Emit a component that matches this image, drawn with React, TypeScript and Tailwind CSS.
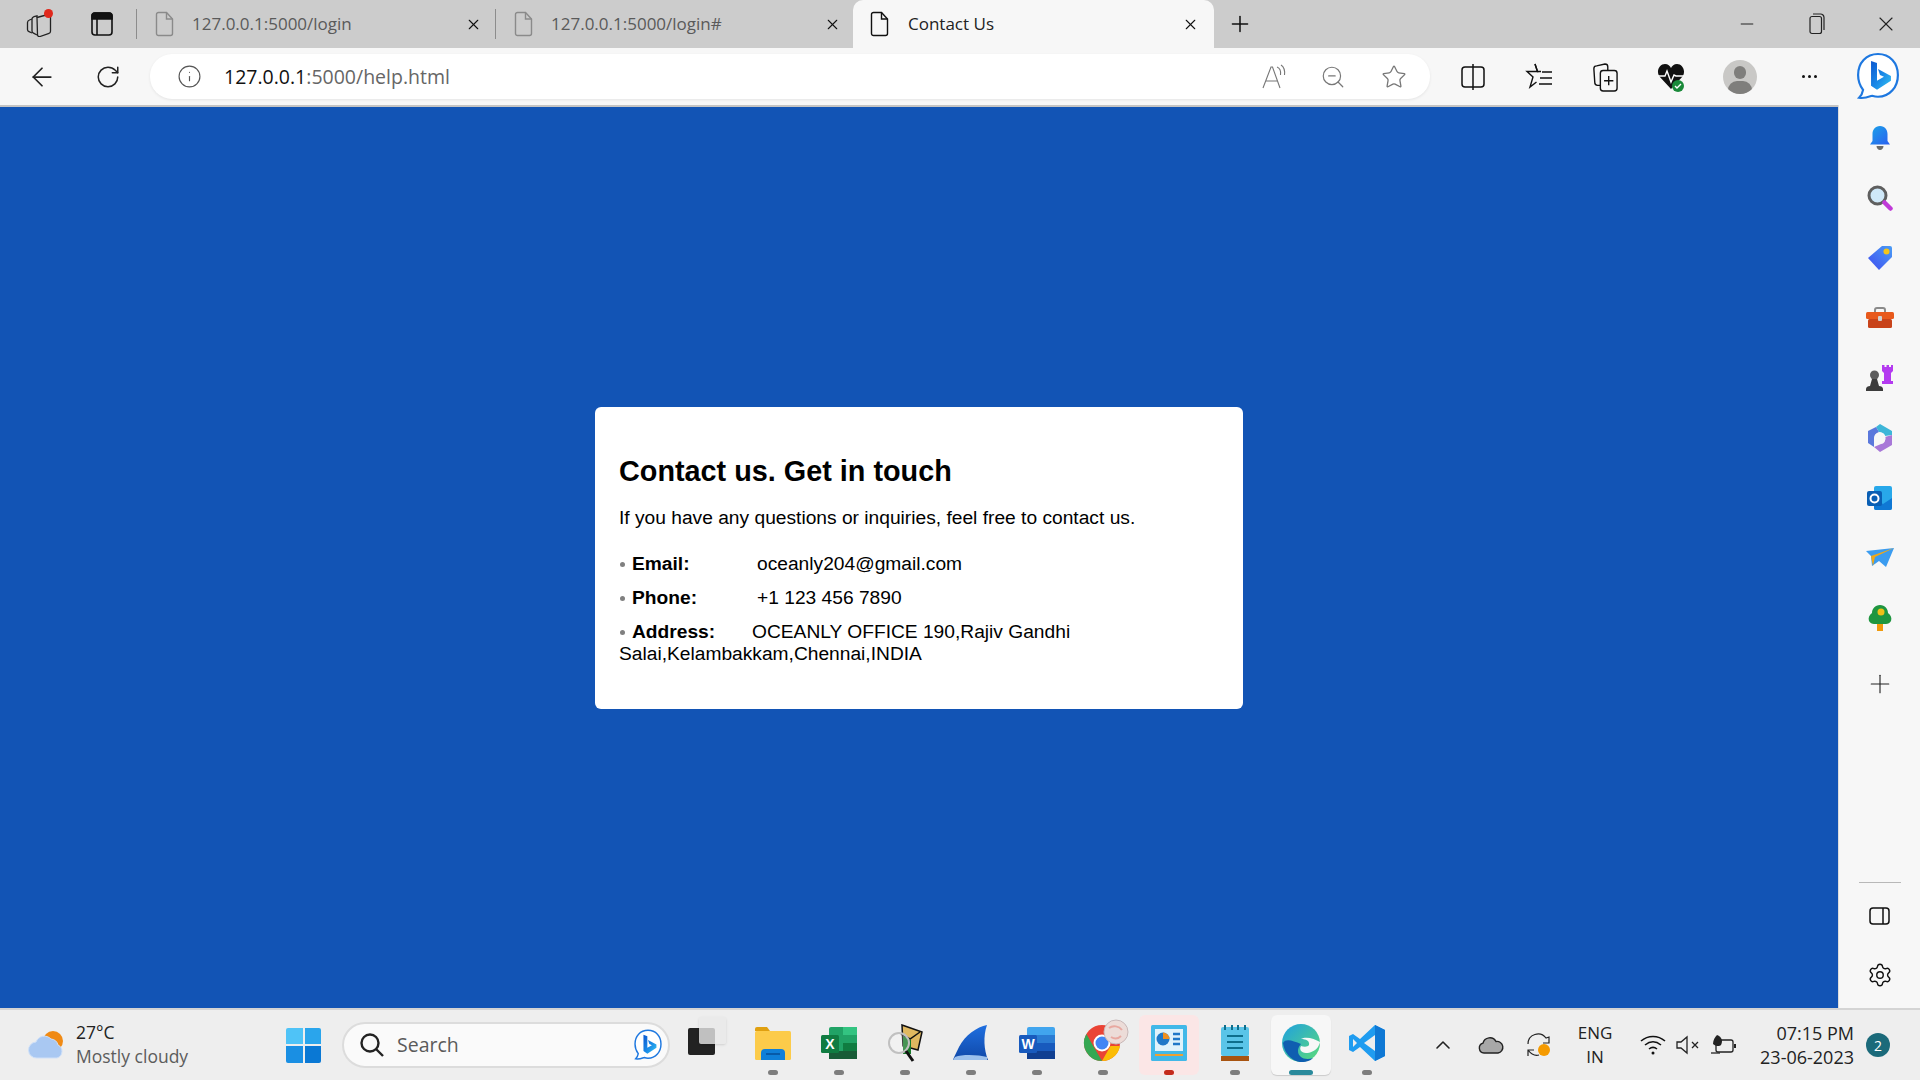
import { ArrowLeft, ChevronUp, Info, Minus, Plus, RotateCw, Settings, Star, X, ZoomOut } from 'lucide-react'
import type { ReactNode } from 'react'

const ui = { fontFamily: '"Open Sans", "Noto Sans", sans-serif' }

function FileIcon({ color = '#8a8a8a' }: { color?: string }) {
    return (
        <svg width="20" height="26" viewBox="0 0 20 26" fill="none" stroke={color} strokeWidth="1.4">
            <path d="M3.5 1.5h8l6 6.5v14.5a2 2 0 0 1-2 2h-12a2 2 0 0 1-2-2v-19a2 2 0 0 1 2-2z" />
            <path d="M11.5 1.5v6.5h6" />
        </svg>
    )
}

function Tab({ title, separator = true }: { title: string; separator?: boolean }) {
    return (
        <div className="flex h-full w-[359px] items-center">
            {separator && <div className="h-[30px] w-px bg-[#8c8c8c]" />}
            <div className="ml-[18px] flex w-[340px] items-center">
                <FileIcon />
                <span className="mt-[-1px] ml-[17px] flex-1 text-[17px] text-[#5a5a5a]">{title}</span>
                <X size={17} strokeWidth={1.5} color="#111" className="mr-[13px]" />
            </div>
        </div>
    )
}

function BingLogo({ size = 46, id }: { size?: number; id: string }) {
    return (
        <svg width={size} height={size * 1.06} viewBox="0 0 46 49">
            <defs>
                <linearGradient id={id} x1="0" y1="0" x2="1" y2="1">
                    <stop offset="0" stopColor="#0b57d0" />
                    <stop offset="0.55" stopColor="#1b8ce8" />
                    <stop offset="1" stopColor="#37c6f0" />
                </linearGradient>
            </defs>
            <path d="M23 2C11 2 3 11 3 23c0 6 2 11 5 15-.5 3-2 6-4 8 5 1 10-1 13-2 2 .6 4 1 6 1 12 0 20-10 20-22S35 2 23 2z" fill="#fff" stroke="#1e78e0" strokeWidth="2.2" />
            <path d="M16 9l6 2v18l7-4-4-2-2-6 13 7v5l-14 9-6-4z" fill={`url(#${id})`} />
        </svg>
    )
}

function TitleBar() {
    return (
        <div className="flex h-12 shrink-0 items-center bg-[#cccccc]">
            <div className="flex w-[78px] justify-center">
                <div className="relative h-[26px] w-[26px]">
                    <svg width="26" height="26" viewBox="0 0 26 26" fill="none" stroke="#222" strokeWidth="1.3">
                        <path d="M11 6.5l11-3c1.2-.3 2.5.5 2.5 1.8v15c0 1-.5 1.8-1.5 2l-9 3.2c-1.3.3-2.5-.5-2.5-1.8z" />
                        <path d="M11 6.5V4.8l-3 .8C6.8 6 6 6.8 6 8v12c0 1 .6 1.8 1.5 2.2L11 24" />
                        <path d="M6 8L3.5 9C2.2 9.500 1.5 10.5 1.5 11.5v7c0 1 .6 1.8 1.5 2.2L6 22" />
                    </svg>
                    <div className="absolute right-[-1px] top-[-2px] size-[9px] rounded-full bg-[#e0281c]" />
                </div>
            </div>
            <div className="flex w-[48px] justify-center">
                <svg width="22" height="24" viewBox="0 0 22 24" fill="none" stroke="#111" strokeWidth="1.6">
                    <rect x="1" y="1" width="20" height="22" rx="3" />
                    <path d="M1 3.5a2.5 2.5 0 0 1 2.5-2.5h15A2.5 2.5 0 0 1 21 3.5V7H1z" fill="#111" />
                    <path d="M6 7v16" />
                </svg>
            </div>
            <div className="ml-[10px] flex h-full">
                <Tab title="127.0.0.1:5000/login" />
                <Tab title="127.0.0.1:5000/login#" />
            </div>
            <div className="ml-[-1px] flex h-full w-[361px] items-center rounded-t-[10px] bg-[#f7f7f7] pl-[17px]">
                <FileIcon color="#111" />
                <span className="mt-[-1px] ml-[18px] flex-1 text-[17px] text-[#222]">Contact Us</span>
                <X size={17} strokeWidth={1.5} color="#111" className="mr-[15px]" />
            </div>
            <Plus size={26} strokeWidth={1.4} color="#111" className="ml-[13px]" />
            <div className="flex-1" />
            <Minus size={20} strokeWidth={1.2} color="#222" className="mr-[52px]" />
            <svg width="16" height="22" viewBox="0 0 16 22" fill="none" stroke="#222" strokeWidth="1.2" className="mr-[49px]">
                <rect x="1" y="3.5" width="11.5" height="17" rx="2" />
                <path d="M4 1h7.5A3.5 3.5 0 0 1 15 4.5V17" />
            </svg>
            <X size={24} strokeWidth={1.1} color="#222" className="mr-[22px]" />
        </div>
    )
}

function ToolSlot({ width, children }: { width: number; children: ReactNode }) {
    return (
        <div className="flex items-center justify-center" style={{ width }}>
            {children}
        </div>
    )
}

function Toolbar() {
    return (
        <div className="flex h-[57px] shrink-0 items-center bg-[#f7f7f7]">
            <div className="flex w-[150px] items-center">
                <ArrowLeft size={30} strokeWidth={1.4} color="#222" className="ml-[27px]" />
                <RotateCw size={26} strokeWidth={1.4} color="#222" className="ml-[38px]" />
            </div>
            <div className="flex h-[45px] w-[1280px] items-center rounded-[22px] bg-white shadow-[0_1px_3px_rgba(0,0,0,0.08)]">
                <Info size={25} strokeWidth={1.1} color="#555" className="ml-[27px]" />
                <span className="ml-[22px] flex-1 text-[19.5px] text-[#666]">
                    <span className="text-[#111]">127.0.0.1</span>:5000/help.html
                </span>
                <svg width="26" height="26" viewBox="0 0 26 26" fill="none" stroke="#777" strokeWidth="1.1" className="mr-[33px]">
                    <path d="M2 24L10 3h1.5L19 24M5 17h12" />
                    <path d="M16 3c3 1 4 4 3.5 8M20 1c3 2 4 6 3.5 10" />
                </svg>
                <ZoomOut size={26} strokeWidth={1.1} color="#777" className="mr-[35px]" />
                <Star size={26} strokeWidth={1.2} color="#777" className="mr-[23px]" />
            </div>
            <ToolSlot width={86}>
                <svg width="24" height="28" viewBox="0 0 24 28" fill="none" stroke="#111" strokeWidth="1.5">
                    <rect x="1" y="4" width="22" height="20" rx="3" />
                    <path d="M12 1v26" />
                </svg>
            </ToolSlot>
            <ToolSlot width={46}>
                <svg width="28" height="30" viewBox="0 0 28 30" fill="none" stroke="#111" strokeWidth="1.4">
                    <path d="M10 2l2.5 7.5H2l6 5.5-3 10 6.5-5" />
                    <path d="M10 2l2.5 7.5H16M17 10h10M15 16h12M14 22h13" />
                </svg>
            </ToolSlot>
            <ToolSlot width={86}>
                <svg width="26" height="30" viewBox="0 0 28 32" fill="none" stroke="#111" strokeWidth="1.5">
                    <rect x="9" y="9" width="18" height="22" rx="3" />
                    <path d="M18 15v10M13 20h10" />
                    <path d="M9 25H6a3 3 0 0 1-3-3L2 7a3 3 0 0 1 3-3l9-2a3 3 0 0 1 3 3v4" />
                </svg>
            </ToolSlot>
            <ToolSlot width={46}>
                <svg width="28" height="32" viewBox="0 0 28 32">
                    <path d="M14 28L2 15C-1 9 3 3 8 3c3 0 5 2 6 4 1-2 3-4 6-4 5 0 9 6 6 12z" fill="#111" />
                    <path d="M1 15h7l2-5 4 11 3-7 2 1h8" fill="none" stroke="#fff" strokeWidth="1.4" />
                    <circle cx="21" cy="25" r="6" fill="#1a8a3a" />
                    <path d="M18 25l2 2 4-4" fill="none" stroke="#fff" strokeWidth="1.4" />
                </svg>
            </ToolSlot>
            <ToolSlot width={92}>
                <div className="relative size-[34px] overflow-hidden rounded-full bg-[#c9c8c6]">
                    <div className="absolute left-[11px] top-[6px] h-[13px] w-[12px] rounded-full bg-[#7f7e7c]" />
                    <div className="absolute left-[5px] top-[21px] h-[18px] w-[24px] rounded-full bg-[#7f7e7c]" />
                </div>
            </ToolSlot>
            <ToolSlot width={46}>
                <div className="flex gap-[3px]">
                    <div className="size-[3px] rounded-full bg-[#111]" />
                    <div className="size-[3px] rounded-full bg-[#111]" />
                    <div className="size-[3px] rounded-full bg-[#111]" />
                </div>
            </ToolSlot>
            <div className="ml-[17px] flex w-[58px] justify-center">
                <BingLogo id="bing-top" />
            </div>
        </div>
    )
}

function Bullet() {
    return <span className="mr-[7px] ml-px inline-block size-[5px] rounded-full bg-[#808080] align-[3px]" />
}

function ContactCard() {
    return (
        <div className="w-[648px] rounded-[6px] bg-white p-6 text-[19.2px] leading-[22px] text-black" style={{ fontFamily: '"Liberation Sans", Arial, sans-serif' }}>
            <h2 className="mt-6 text-[28.8px] leading-[33px] font-bold">Contact us. Get in touch</h2>
            <p className="mt-[19px]">If you have any questions or inquiries, feel free to contact us.</p>
            <ul className="mt-[24px] mb-[20px]">
                <li className="mb-3">
                    <Bullet />
                    <strong className="inline-block w-[125px]">Email:</strong>
                    oceanly204@gmail.com
                </li>
                <li className="mb-3">
                    <Bullet />
                    <strong className="inline-block w-[125px]">Phone:</strong>
                    +1 123 456 7890
                </li>
                <li>
                    <Bullet />
                    <strong className="inline-block w-[120px]">Address:</strong>
                    OCEANLY OFFICE 190,Rajiv Gandhi Salai,Kelambakkam,Chennai,INDIA
                </li>
            </ul>
        </div>
    )
}

function SideSlot({ children }: { children: ReactNode }) {
    return <div className="flex h-[60px] items-center justify-center">{children}</div>
}

function Sidebar() {
    return (
        <div className="flex w-[82px] shrink-0 flex-col items-center border-l border-[#dcdcdc] bg-[#f7f7f7] pt-[3px]">
            <SideSlot>
                <svg width="24" height="26" viewBox="0 0 24 26">
                    <defs>
                        <linearGradient id="bell" x1="0" y1="0" x2="1" y2="1">
                            <stop offset="0" stopColor="#1aa3e8" />
                            <stop offset="1" stopColor="#2a5ff0" />
                        </linearGradient>
                    </defs>
                    <path d="M12 1c-5 0-7.5 4-7.5 8v7L2 19.5h20L19.5 16V9c0-4-2.5-8-7.5-8z" fill="url(#bell)" />
                    <path d="M8.5 21h7c0 2-1.5 4-3.5 4s-3.5-2-3.5-4z" fill="#6b6b6b" />
                </svg>
            </SideSlot>
            <SideSlot>
                <svg width="26" height="26" viewBox="0 0 26 26">
                    <circle cx="10.5" cy="10.5" r="8.5" fill="#cfe8f8" stroke="#5f5f5f" strokeWidth="3" />
                    <path d="M17.5 17.5l6 6" stroke="#c03ad8" strokeWidth="4.5" strokeLinecap="round" />
                </svg>
            </SideSlot>
            <SideSlot>
                <svg width="26" height="26" viewBox="0 0 26 26">
                    <defs>
                        <linearGradient id="tag" x1="0" y1="1" x2="1" y2="0">
                            <stop offset="0" stopColor="#3f4df0" />
                            <stop offset="1" stopColor="#4a9cf5" />
                        </linearGradient>
                    </defs>
                    <path d="M15 1h8a2 2 0 0 1 2 2v9L12 25 1 13z" fill="url(#tag)" strokeLinejoin="round" />
                    <circle cx="19.5" cy="6.5" r="3" fill="#f5c518" />
                </svg>
            </SideSlot>
            <SideSlot>
                <svg width="28" height="22" viewBox="0 0 28 22">
                    <path d="M9 6V3a2 2 0 0 1 2-2h6a2 2 0 0 1 2 2v3" fill="none" stroke="#8a8a8a" strokeWidth="2" />
                    <rect x="0" y="5" width="28" height="7" rx="1.5" fill="#e8591c" />
                    <rect x="2" y="12" width="24" height="9" rx="1.5" fill="#c8431a" />
                    <rect x="12" y="9" width="4" height="5" rx="1" fill="#d0d0d0" />
                </svg>
            </SideSlot>
            <SideSlot>
                <svg width="28" height="28" viewBox="0 0 28 28">
                    <path d="M16 1h2.5v2h2V1h2.5v2h2V1h2v6l-2 2v8h2v3H16v-3h2V9l-2-2z" fill="#b43af0" />
                    <circle cx="8.5" cy="11" r="4.5" fill="#5c5c5c" />
                    <path d="M6 15h5l2 7H4zM0 25c0-2 2-3 4-3h9c2 0 4 1 4 3v2H0z" fill="#3c3c3c" />
                </svg>
            </SideSlot>
            <SideSlot>
                <svg width="26" height="28" viewBox="0 0 26 28">
                    <path d="M13 0l12 7v4l-7 1c-1-3-3-4-6-4L9 3z" fill="#3db6d8" />
                    <path d="M1 7l8-4 3 5c-3 1-5 3-5 6v9l-6-4z" fill="#5a78dc" />
                    <path d="M25 11v10l-12 7-6-5 7-3c3 0 5-3 4-7z" fill="#a878d8" />
                    <circle cx="13" cy="14" r="5.5" fill="#f7f7f7" />
                </svg>
            </SideSlot>
            <SideSlot>
                <svg width="26" height="26" viewBox="0 0 26 26">
                    <rect x="7" y="1" width="18" height="24" rx="2" fill="#28a8ea" />
                    <path d="M7 13l9 6 9-6v10a2 2 0 0 1-2 2H9a2 2 0 0 1-2-2z" fill="#0f78d4" />
                    <rect x="0" y="6" width="15" height="15" rx="2" fill="#0a5fb4" />
                    <circle cx="7.5" cy="13.5" r="4" fill="none" stroke="#fff" strokeWidth="2" />
                </svg>
            </SideSlot>
            <SideSlot>
                <svg width="28" height="20" viewBox="0 0 28 20">
                    <path d="M0 3l28-3-8 19-7-6-7 5-1-10z" fill="#3b9cf0" />
                    <path d="M5 8L28 0 9 9l-2 9z" fill="#f0a818" />
                </svg>
            </SideSlot>
            <SideSlot>
                <svg width="24" height="26" viewBox="0 0 24 26">
                    <rect x="9" y="17" width="6" height="9" fill="#f09a0c" />
                    <path d="M12 0c5 0 8 4 8 8 3 2 4 5 3 8-1 2-3 3-5 3H6c-2 0-4-1-5-3-1-3 0-6 3-8 0-4 3-8 8-8z" fill="#1f9640" />
                    <circle cx="13" cy="7" r="3.5" fill="#f0c018" />
                </svg>
            </SideSlot>
            <div className="flex h-[72px] items-center">
                <Plus size={30} strokeWidth={0.9} color="#222" />
            </div>
            <div className="flex-1" />
            <div className="h-px w-[42px] bg-[#b8b8b8]" />
            <div className="flex h-[66px] items-center">
                <svg width="21" height="18" viewBox="0 0 21 18" fill="none" stroke="#111" strokeWidth="1.5">
                    <rect x="1" y="1" width="19" height="16" rx="3" />
                    <path d="M14 1v16" />
                </svg>
            </div>
            <div className="mb-[7px] flex h-[52px] items-center">
                <Settings size={26} strokeWidth={1.3} color="#111" />
            </div>
        </div>
    )
}

function TaskIcon({ children, dot = '#7d7d7d', dotWidth = 10, className = '' }: { children: ReactNode; dot?: string; dotWidth?: number; className?: string }) {
    return (
        <div className="flex w-[66px] justify-center">
            <div className={`flex h-[60px] w-[60px] flex-col items-center rounded-[6px] pt-[9px] ${className}`}>
                <div className="flex h-[38px] w-full items-center justify-center">{children}</div>
                <div className="mt-[8px] h-[5px] rounded-full" style={{ width: dotWidth, backgroundColor: dot }} />
            </div>
        </div>
    )
}

function Taskbar() {
    return (
        <div className="flex h-[72px] shrink-0 items-center border-t-2 border-[#d4d4d4] bg-[#eeeeee]" style={ui}>
            <svg width="38" height="30" viewBox="0 0 38 30" className="ml-[28px]">
                <circle cx="25" cy="11" r="10" fill="#f08a14" />
                <path d="M9 28a8 8 0 0 1-1-16 9 9 0 0 1 15-3 8 8 0 0 1 7 6 7 7 0 0 1-1 13z" fill="#a9c8f2" stroke="#cfe0f8" />
            </svg>
            <div className="mt-[-2px] ml-[10px] w-[210px] text-[17.5px] leading-[24px] text-[#222]">
                <div>27°C</div>
                <div className="text-[#5c5c5c]">Mostly cloudy</div>
            </div>
            <div className="grid size-[35px] grid-cols-2 gap-[2px] overflow-hidden rounded-[2px]">
                <div className="bg-[#4fc3f7]" />
                <div className="bg-[#2aa5ec]" />
                <div className="bg-[#1a8fe3]" />
                <div className="bg-[#0a78d4]" />
            </div>
            <div className="ml-[21px] flex h-[46px] w-[328px] items-center rounded-full border-2 border-[#dcdcdc] bg-[#fafafa]">
                <svg width="26" height="26" viewBox="0 0 26 26" fill="none" stroke="#222" strokeWidth="2.4" className="ml-[15px]">
                    <circle cx="11" cy="11" r="8.5" />
                    <path d="M17 17l7 7" />
                </svg>
                <span className="ml-[12px] flex-1 text-[19.5px] text-[#5a5a5a]">Search</span>
                <div className="mr-[5px]">
                    <BingLogo size={30} id="bing-task" />
                </div>
            </div>
            <div className="ml-[4px] flex">
                <div className="flex w-[66px] justify-center">
                    <div className="relative mt-[2px] h-[38px] w-[38px]">
                        <div className="absolute bottom-0 left-0 h-[27px] w-[27px] rounded-[2px] bg-[#222]" />
                        <div className="absolute right-0 top-0 h-[27px] w-[27px] rounded-[2px] bg-[#e8e8e8]/80 shadow-sm" />
                    </div>
                </div>
                <TaskIcon>
                    <svg width="36" height="34" viewBox="0 0 36 34">
                        <path d="M0 3a2 2 0 0 1 2-2h10l3 4h-15z" fill="#e0a010" />
                        <rect x="0" y="5" width="36" height="29" rx="1.5" fill="#fccb4a" />
                        <path d="M6 34v-7a4 4 0 0 1 4-4h16a4 4 0 0 1 4 4v7z" fill="#0f7fd8" />
                        <rect x="11" y="27" width="14" height="2" fill="#075aa8" />
                    </svg>
                </TaskIcon>
                <TaskIcon>
                    <svg width="36" height="34" viewBox="0 0 36 34">
                        <rect x="8" y="1" width="28" height="32" rx="2" fill="#21a366" />
                        <rect x="22" y="1" width="14" height="8" fill="#33c481" />
                        <rect x="22" y="17" width="14" height="8" fill="#107c41" />
                        <rect x="8" y="25" width="28" height="8" fill="#185c37" />
                        <rect x="0" y="9" width="18" height="18" rx="1.5" fill="#107c41" />
                        <text x="9" y="23" textAnchor="middle" fontSize="14" fontWeight="700" fill="#fff" fontFamily="Liberation Sans">X</text>
                    </svg>
                </TaskIcon>
                <TaskIcon>
                    <svg width="36" height="38" viewBox="0 0 36 38">
                        <path d="M15 1l20 7-4 18-15-4z" fill="#e0b860" stroke="#111" strokeWidth="1.5" />
                        <path d="M14 10l9 5 10-7" fill="none" stroke="#111" strokeWidth="1.5" />
                        <path d="M16 12l8 4v14h-8z" fill="#1a7a2a" />
                        <circle cx="12" cy="19" r="10" fill="#ffffff" fillOpacity="0.2" stroke="#c0c0c0" strokeWidth="2" />
                        <path d="M19 27l7 10" stroke="#111" strokeWidth="3" />
                    </svg>
                </TaskIcon>
                <TaskIcon>
                    <svg width="36" height="36" viewBox="0 0 36 36">
                        <defs>
                            <linearGradient id="fin" x1="0" y1="0" x2="0" y2="1">
                                <stop offset="0" stopColor="#1f6fe0" />
                                <stop offset="1" stopColor="#1048a8" />
                            </linearGradient>
                        </defs>
                        <path d="M34 0C24 2 12 10 6 22 3 28 1 32 0 35h35c-4-10-5-24-1-35z" fill="url(#fin)" />
                        <path d="M2 32c8-3 24-2 32 0v3H0z" fill="#9cc0ec" />
                    </svg>
                </TaskIcon>
                <TaskIcon>
                    <svg width="36" height="34" viewBox="0 0 36 34">
                        <rect x="8" y="1" width="28" height="32" rx="2" fill="#41a5ee" />
                        <rect x="8" y="9" width="28" height="8" fill="#2b7cd3" />
                        <rect x="8" y="17" width="28" height="8" fill="#185abd" />
                        <rect x="8" y="25" width="28" height="8" fill="#103f91" />
                        <rect x="0" y="9" width="18" height="18" rx="1.5" fill="#185abd" />
                        <text x="9" y="23" textAnchor="middle" fontSize="14" fontWeight="700" fill="#fff" fontFamily="Liberation Sans">W</text>
                    </svg>
                </TaskIcon>
                <TaskIcon>
                    <svg width="46" height="44" viewBox="0 0 46 44" className="mt-[-4px] ml-[6px]">
                        <circle cx="19" cy="24" r="18" fill="#ea4335" />
                        <path d="M19 42a18 18 0 0 1-15.6-27L12 30l7 12z" fill="#34a853" />
                        <path d="M19 42l8.5-15H37a18 18 0 0 1-18 15z" fill="#fbbc05" />
                        <circle cx="19" cy="24" r="8.5" fill="#fff" />
                        <circle cx="19" cy="24" r="6.5" fill="#4285f4" />
                        <circle cx="33" cy="13" r="12" fill="#ecdcd8" stroke="#c8b8b8" />
                        <path d="M26 9c4-3 10-2 13 2M28 18c3 2 7 2 10-1" stroke="#e8a8a0" strokeWidth="2" fill="none" />
                    </svg>
                </TaskIcon>
                <TaskIcon dot="#c42b1c" className="bg-[#fbe6e6]">
                    <svg width="36" height="38" viewBox="0 0 36 38">
                        <rect x="0" y="1" width="36" height="36" rx="1.5" fill="#42b8e8" />
                        <rect x="4" y="5" width="28" height="22" fill="#dff2fb" />
                        <circle cx="12" cy="15" r="6.5" fill="#1f78c8" />
                        <path d="M12 15V8.5a6.5 6.5 0 0 1 6.5 6.5z" fill="#f09020" />
                        <path d="M22 10h7M22 15h7M22 20h7" stroke="#1f78c8" strokeWidth="2.5" />
                        <path d="M4 31h28" stroke="#f0a030" strokeWidth="2" />
                    </svg>
                </TaskIcon>
                <TaskIcon>
                    <svg width="28" height="38" viewBox="0 0 28 38">
                        <rect x="0" y="3" width="28" height="29" rx="2" fill="#5ac4e8" />
                        <rect x="0" y="32" width="28" height="5" fill="#a85410" />
                        <path d="M4 1v5M11 1v5M17 1v5M24 1v5" stroke="#0e6e8c" strokeWidth="2" />
                        <path d="M6 12h16M6 18h16M6 24h16" stroke="#0e6e8c" strokeWidth="2" />
                    </svg>
                </TaskIcon>
                <TaskIcon dot="#2a8a9c" dotWidth={24} className="bg-[#f7f7f7] shadow-[0_1px_1px_rgba(0,0,0,0.15)]">
                    <svg width="38" height="38" viewBox="0 0 38 38">
                        <defs>
                            <linearGradient id="edge" x1="0" y1="0" x2="1" y2="1">
                                <stop offset="0" stopColor="#1fa0e0" />
                                <stop offset="1" stopColor="#5cdc78" />
                            </linearGradient>
                        </defs>
                        <circle cx="19" cy="19" r="19" fill="url(#edge)" />
                        <path d="M1 19C3 33 14 38 19 38c7 0 10-2 12-4-8 3-15-1-15-7 0-4 3-7 3-7-8-3-15-6-18-1z" fill="#0f5eb0" />
                        <path d="M19 15c5 0 9 2 8 6-1 2-5 2-8 1-2 3 0 7 5 7 4 0 9-2 12-6 1-2 2-4 2-5-5-3-14-6-19-3z" fill="#f7f7f7" />
                    </svg>
                </TaskIcon>
                <TaskIcon>
                    <svg width="36" height="36" viewBox="0 0 36 36">
                        <path d="M26 0l10 5v26l-10 5-15-14-7 5-4-2V11l4-2 7 5z" fill="#1f9cf0" />
                        <path d="M26 0v36l10-5V5z" fill="#0f78d4" />
                        <path d="M26 10L15 18l11 8z" fill="#eeeeee" />
                        <path d="M4 14v8l4-4z" fill="#eeeeee" />
                    </svg>
                </TaskIcon>
            </div>
            <ChevronUp size={24} strokeWidth={1.6} color="#222" className="ml-[31px]" />
            <svg width="26" height="18" viewBox="0 0 26 18" className="ml-[23px]">
                <path d="M6 17a5 5 0 0 1-1-9.8A7 7 0 0 1 18 5.5a5.5 5.5 0 0 1 2 11.5z" fill="#a8a8a8" stroke="#222" strokeWidth="1.4" />
            </svg>
            <svg width="26" height="26" viewBox="0 0 26 26" fill="none" stroke="#222" strokeWidth="1.2" className="ml-[22px]">
                <path d="M2 12A10 10 0 0 1 20 6l3-1v6h-6" />
                <path d="M2 24v-6h6M2 18c3 4 7 6 11 5" />
                <circle cx="18" cy="18" r="6" fill="#f59a00" stroke="none" />
            </svg>
            <div className="ml-[10px] w-[66px] text-center text-[17px] leading-[24px] text-[#222]">
                <div>ENG</div>
                <div>IN</div>
            </div>
            <svg width="26" height="20" viewBox="0 0 26 20" fill="none" stroke="#111" strokeWidth="1.6" className="ml-[12px]">
                <path d="M1 6c7-6 17-6 24 0M5 10c5-4 11-4 16 0M9 14c2.5-2 5.5-2 8 0" />
                <circle cx="13" cy="18" r="1.5" fill="#111" stroke="none" />
            </svg>
            <svg width="24" height="20" viewBox="0 0 24 20" fill="none" stroke="#222" strokeWidth="1.3" className="ml-[10px]">
                <path d="M1 7h4l6-5v16l-6-5H1z" />
                <path d="M16 7l6 6M22 7l-6 6" />
            </svg>
            <svg width="26" height="22" viewBox="0 0 26 22" fill="none" stroke="#222" strokeWidth="1.3" className="ml-[10px]">
                <rect x="6" y="6" width="17" height="12" rx="2" />
                <path d="M25 10v4" strokeWidth="2" />
                <path d="M7 1c5 2 6 6 4 10-2 2-6 1-8-1 0-4 2-7 4-9z" fill="#222" stroke="none" />
                <path d="M1 19h9" />
            </svg>
            <div className="ml-[11px] w-[107px] text-right text-[18px] leading-[24px] whitespace-nowrap text-[#222]">
                <div>07:15 PM</div>
                <div>23-06-2023</div>
            </div>
            <div className="ml-[12px] flex size-[24px] items-center justify-center rounded-full bg-[#1b6a7a] text-[14px] text-white">2</div>
        </div>
    )
}

export default function App() {
    return (
        <div className="flex h-screen w-screen flex-col overflow-hidden" style={ui}>
            <TitleBar />
            <Toolbar />
            <div className="flex min-h-0 flex-1">
                <div className="flex flex-1 items-center justify-center border-t-2 border-[#c4c4c4] bg-[#1254b5]">
                    <ContactCard />
                </div>
                <Sidebar />
            </div>
            <Taskbar />
        </div>
    )
}
